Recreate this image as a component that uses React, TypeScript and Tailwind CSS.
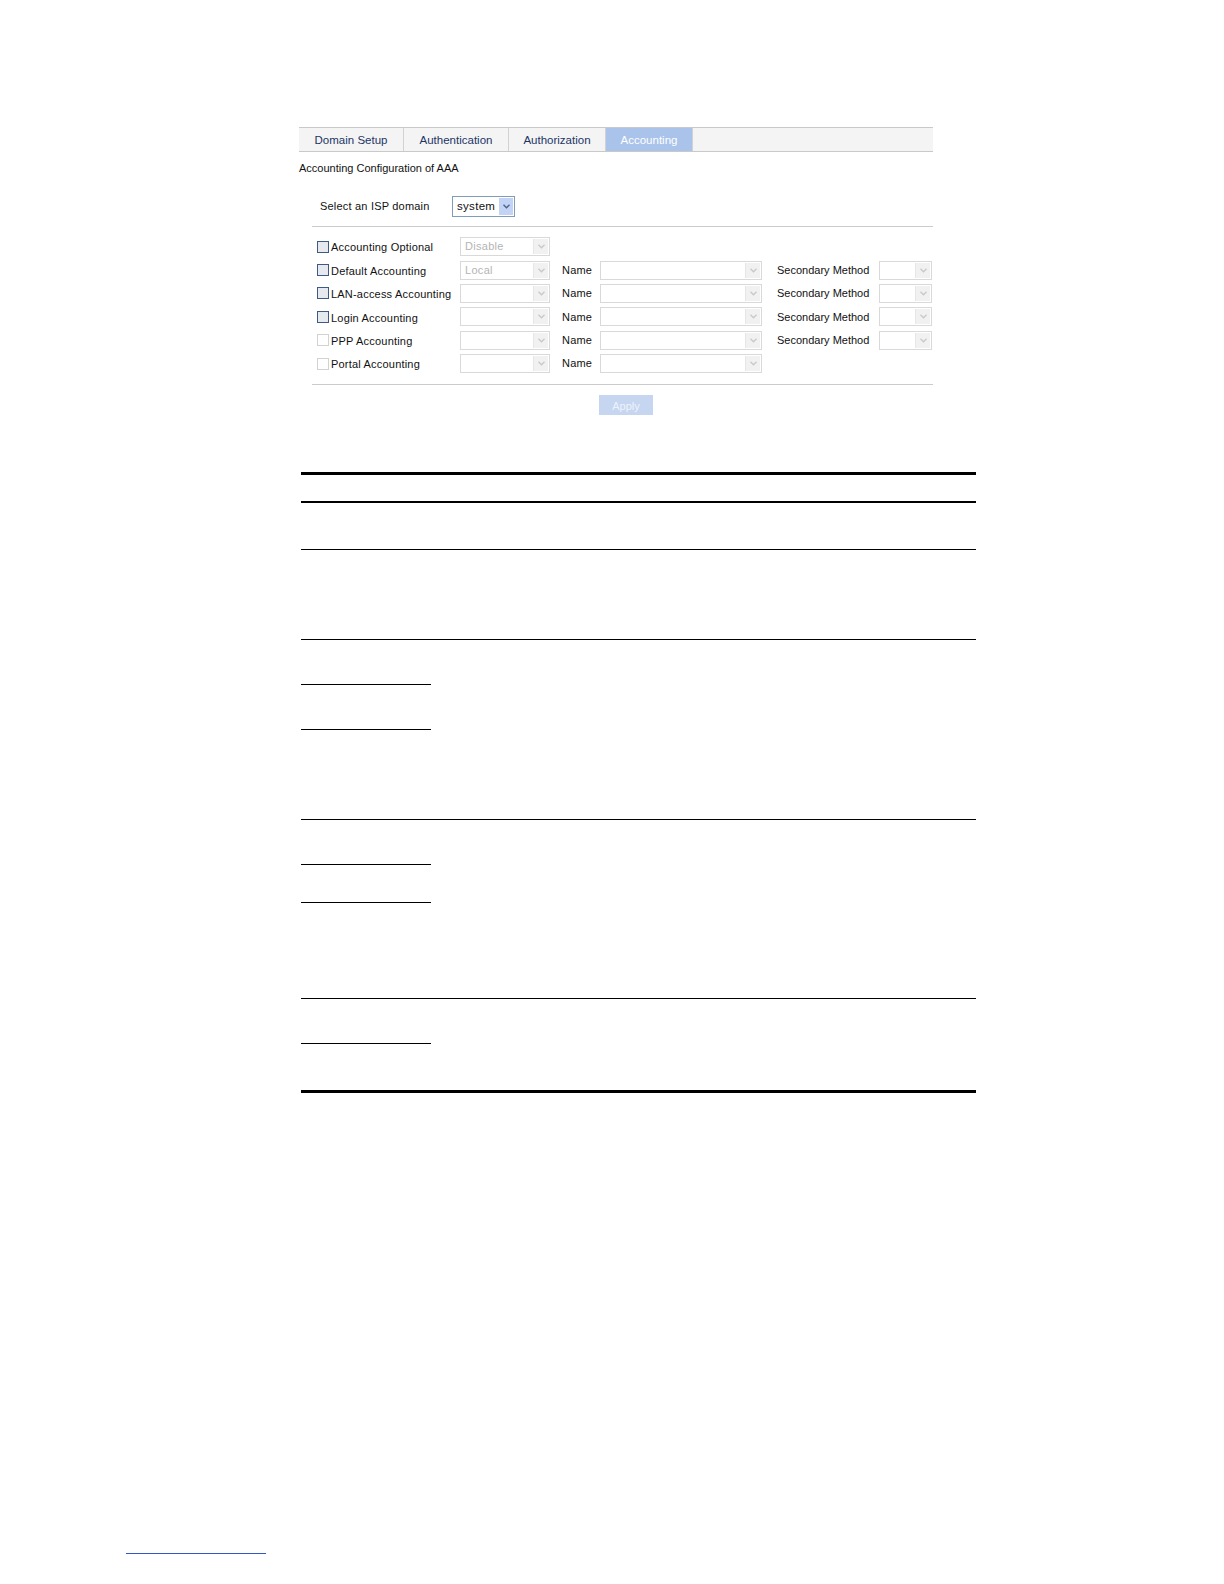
import React from "react";

const tabs = [
  { label: "Domain Setup", w: "w-[105px]", active: false },
  { label: "Authentication", w: "w-[105px]", active: false },
  { label: "Authorization", w: "w-[97px]", active: false },
  { label: "Accounting", w: "w-[87px]", active: true },
];

const rows = [
  { label: "Accounting Optional", value: "Disable", name: false, second: false, dark: true },
  { label: "Default Accounting", value: "Local", name: true, second: true, dark: true },
  { label: "LAN-access Accounting", value: "", name: true, second: true, dark: true },
  { label: "Login Accounting", value: "", name: true, second: true, dark: true },
  { label: "PPP Accounting", value: "", name: true, second: true, dark: false },
  { label: "Portal Accounting", value: "", name: true, second: false, dark: false },
];

// left column cell heights per group (table text is blank in the source)
const groups = [[46], [89], [45, 45, 89], [45, 38, 95], [45, 46]];

function Chevron({ color }: { color: string }) {
  return (
    <svg width="7" height="5" viewBox="0 0 7 5">
      <polyline points="0.5,0.8 3.5,3.8 6.5,0.8" fill="none" stroke={color} strokeWidth="1.3" />
    </svg>
  );
}

function DisabledSelect({ w, value }: { w: string; value?: string }) {
  return (
    <div className={`${w} h-[19px] flex items-stretch border border-[#d9d9d9] bg-white`}>
      <div className="flex-1 pl-[4px] text-[11px] leading-[17px] text-[#b4b4b4] tracking-[0.3px]">{value}</div>
      <div className="w-[15px] my-[1px] mr-[1px] bg-[#f1f1f1] border-l border-[#e6e6e6] flex items-center justify-center">
        <Chevron color="#c8c8c8" />
      </div>
    </div>
  );
}

function Checkbox({ dark }: { dark: boolean }) {
  return (
    <div
      className={`w-[12px] h-[12px] shrink-0 border ${
        dark ? "border-[#3c5a85] bg-[#e6e9ee]" : "border-[#d2d2d2] bg-white"
      }`}
    />
  );
}

export default function App() {
  return (
    <div className="h-[1584px] w-full overflow-hidden bg-white text-[#111] font-['Liberation_Sans',Arial,sans-serif]">
      <div className="pt-[127px] pl-[299px]">
        <div className="w-[634px]">
          {/* tabs */}
          <div className="flex h-[25px] border-y border-[#c9c9c9] bg-[#f4f4f4]">
            {tabs.map((t) => (
              <div
                key={t.label}
                className={`${t.w} flex items-center justify-center text-[11.5px] pt-[3px] border-r border-[#d2d2d2] ${
                  t.active ? "bg-[#a9c3ea] text-white" : "text-[#1d3566]"
                }`}
              >
                {t.label}
              </div>
            ))}
          </div>

          <div className="mt-[9px] text-[11px] leading-[14px]">Accounting Configuration of AAA</div>

          <div className="ml-[13px]">
            <div className="flex items-center h-[20px] mt-[21px] pl-[8px]">
              <div className="w-[132px] text-[11px] tracking-[0.2px]">Select an ISP domain</div>
              <div className="w-[63px] h-[21px] flex items-stretch border border-[#7f9db9] bg-white">
                <div className="flex-1 pl-[4px] text-[11.5px] leading-[19px] tracking-[0.3px]">system</div>
                <div className="w-[14px] my-[1px] mr-[1px] bg-[#c3d3f6] flex items-center justify-center">
                  <Chevron color="#4d6185" />
                </div>
              </div>
            </div>

            <div className="mt-[10px] border-t border-[#cbcbcb] pt-[8px] pb-[9px]">
              {rows.map((r) => (
                <div key={r.label} className="flex items-center h-[23.4px] pl-[5px]">
                  <div className="w-[143px] flex items-center gap-[2px] whitespace-nowrap">
                    <Checkbox dark={r.dark} />
                    <span className="text-[11px] tracking-[0.2px] pt-[2px]">{r.label}</span>
                  </div>
                  <DisabledSelect w="w-[90px]" value={r.value} />
                  {r.name && (
                    <>
                      <div className="w-[50px] pl-[12px] text-[11px] tracking-[0.2px]">Name</div>
                      <DisabledSelect w="w-[162px]" />
                    </>
                  )}
                  {r.second && (
                    <>
                      <div className="w-[117px] pl-[15px] text-[11px] whitespace-nowrap">Secondary Method</div>
                      <DisabledSelect w="w-[53px]" />
                    </>
                  )}
                </div>
              ))}
            </div>

            <div className="border-t border-[#cbcbcb] pt-[10px]">
              <div className="ml-[287px] w-[54px] h-[20px] bg-[#c6d6f1] text-[#eef2fa] text-[11px] flex items-center justify-center pt-[2px]">
                Apply
              </div>
            </div>
          </div>
        </div>
      </div>

      {/* blank table */}
      <div className="ml-[301px] mt-[57px] w-[675px] border-t-[3px] border-b-[3px] border-black">
        <div className="h-[28px] border-b-2 border-black" />
        {groups.map((cells, gi) => (
          <div key={gi} className={`flex ${gi > 0 ? "border-t border-black" : ""}`}>
            <div className="w-[130px] flex flex-col">
              {cells.map((h, ci) => (
                <div
                  key={ci}
                  style={{ height: h }}
                  className={ci < cells.length - 1 ? "border-b border-black" : ""}
                />
              ))}
            </div>
            <div className="flex-1" />
          </div>
        ))}
      </div>

      <div className="ml-[126px] mt-[460px] w-[140px] border-b border-[#3355cc]" />
    </div>
  );
}
